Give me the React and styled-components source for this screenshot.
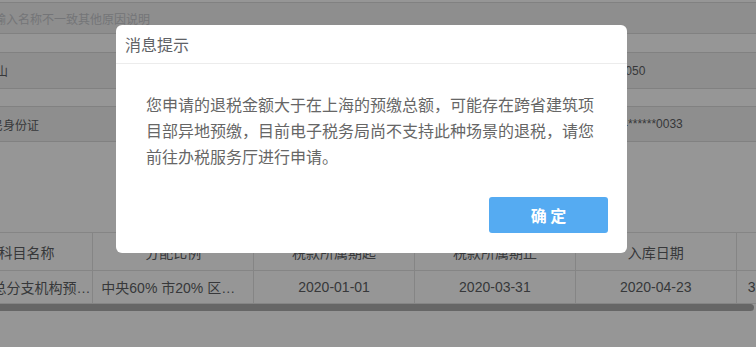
import React from 'react';
import styled, { createGlobalStyle } from 'styled-components';

const GlobalStyle = createGlobalStyle`
  html, body { margin: 0; padding: 0; background: #fbfbfb; }
  body {
    font-family: "Liberation Sans", "Noto Sans CJK SC", sans-serif;
    overflow: hidden;
  }
  * { box-sizing: border-box; }
`;

const Page = styled.div`
  position: relative;
  width: 756px;
  height: 347px;
  overflow: hidden;
  background: #fbfbfb;
  padding-top: 2px;
`;

const Form = styled.div`
  display: flex;
  flex-direction: column;
`;

const FormRow = styled.div`
  display: grid;
  grid-template-columns: 588px 1fr;
  align-items: center;
  height: ${p => p.$h}px;
  background: #ededed;
  border-top: 1px solid #d7d7d7;
  border-bottom: 1px solid #d7d7d7;
  font-size: 12px;
  color: #5c5e62;
`;

const Gap = styled.div`
  height: ${p => p.$h}px;
`;

const FormValue = styled.div`
  margin-left: ${p => p.$shift}px;
  white-space: nowrap;
  color: ${p => (p.$placeholder ? '#c2c4c8' : '#5c5e62')};
`;

const SideValue = styled.div`
  white-space: nowrap;
`;

const TableWrap = styled.div`
  margin-top: 90px;
  margin-left: -68.5px;
`;

const Table = styled.table`
  border-collapse: collapse;
  table-layout: fixed;
  width: 966px;
  font-size: 14px;
  color: #5c5e62;
`;

const Th = styled.th`
  height: 38px;
  border: 1px solid #dedede;
  font-weight: normal;
  padding: 0 10px;
  text-align: center;
  white-space: nowrap;
  overflow: hidden;
`;

const Td = styled.td`
  height: 33px;
  border: 1px solid #dedede;
  padding: ${p => p.$pad || '0 8px'};
  text-align: ${p => p.$align || 'center'};
  white-space: nowrap;
  overflow: hidden;
  text-overflow: ellipsis;
`;

const Scrollbar = styled.div`
  margin-left: -10px;
  width: 764px;
  height: 7px;
  border-radius: 4px;
  background: #aaaaaa;
`;

const Overlay = styled.div`
  position: absolute;
  inset: 0;
  background: rgba(0, 0, 0, 0.4);
  padding: 25px 0 0 116px;
`;

const Dialog = styled.div`
  width: 511px;
  background: #fff;
  border-radius: 6px;
  overflow: hidden;
`;

const DialogHeader = styled.div`
  height: 39px;
  display: flex;
  align-items: center;
  padding-left: 9px;
  font-size: 16px;
  color: #606266;
  border-bottom: 1px solid #ececec;
  font-family: "Noto Sans CJK SC", sans-serif;
`;

const DialogBody = styled.div`
  padding: 27px 29px 0 30px;
  font-size: 16px;
  line-height: 26px;
  color: #666;
  font-family: "Noto Sans CJK SC", sans-serif;
`;

const DialogFooter = styled.div`
  display: flex;
  justify-content: flex-end;
  padding: 28px 19px 20px;
`;

const ConfirmButton = styled.button`
  width: 119px;
  height: 36px;
  border: none;
  border-radius: 3px;
  background: #55abf2;
  color: #fff;
  font-size: 16px;
  font-weight: bold;
  font-family: "Noto Sans CJK SC", sans-serif;
  white-space: pre;
  cursor: pointer;
`;

const headers = ['预算科目名称', '分配比例', '税款所属期起', '税款所属期止', '入库日期', '实缴金额'];

export default function App() {
  return (
    <>
      <GlobalStyle />
      <Page>
        <Form>
          <FormRow $h={32}>
            <FormValue $shift={-18} $placeholder>请输入名称不一致其他原因说明</FormValue>
            <SideValue />
          </FormRow>
          <Gap $h={18} />
          <FormRow $h={37}>
            <FormValue $shift={-16}>中山</FormValue>
            <SideValue>58-350050</SideValue>
          </FormRow>
          <Gap $h={17} />
          <FormRow $h={36}>
            <FormValue $shift={-21}>居民身份证</FormValue>
            <SideValue>310104******0033</SideValue>
          </FormRow>
        </Form>
        <TableWrap>
          <Table>
            <thead>
              <tr>
                {headers.map(h => (
                  <Th key={h}>{h}</Th>
                ))}
              </tr>
            </thead>
            <tbody>
              <tr>
                <Td $align="left" $pad="0 0 0 4px">汇总纳税总分支机构预缴税款</Td>
                <Td $align="left">中央60% 市20% 区县20%</Td>
                <Td>2020-01-01</Td>
                <Td>2020-03-31</Td>
                <Td>2020-04-23</Td>
                <Td $align="left" $pad="0 8px 0 11px">3256.00</Td>
              </tr>
            </tbody>
          </Table>
        </TableWrap>
        <Scrollbar />
        <Overlay>
          <Dialog role="dialog">
            <DialogHeader>消息提示</DialogHeader>
            <DialogBody>
              您申请的退税金额大于在上海的预缴总额，可能存在跨省建筑项目部异地预缴，目前电子税务局尚不支持此种场景的退税，请您前往办税服务厅进行申请。
            </DialogBody>
            <DialogFooter>
              <ConfirmButton>{'确 定'}</ConfirmButton>
            </DialogFooter>
          </Dialog>
        </Overlay>
      </Page>
    </>
  );
}
